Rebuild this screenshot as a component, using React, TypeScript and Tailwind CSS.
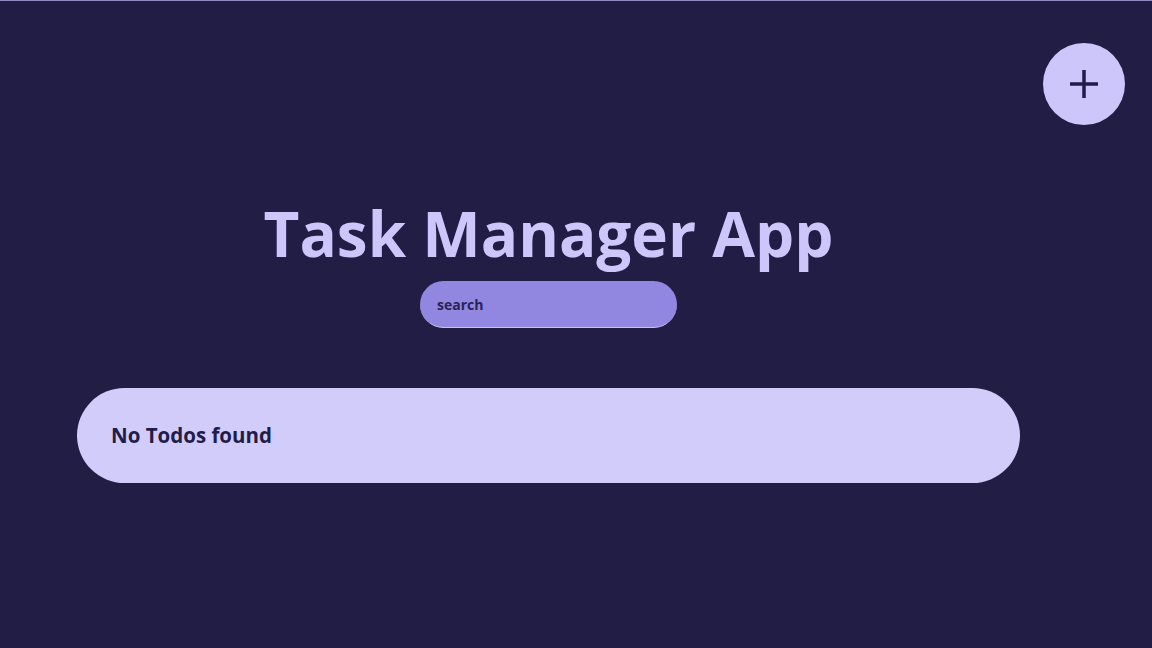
import { useState } from 'react';

/**
 * Task Manager - écran vide (aucune tâche)
 */
const App = () => {
  const [query, setQuery] = useState('');
  const todos: string[] = [];

  return (
    <div
      className="relative min-h-[648px] w-full bg-[#211d45] border-t border-[#8f89c4]"
      style={{ fontFamily: '"Open Sans", "Noto Sans", sans-serif' }}
    >
      <button
        className="absolute top-[42px] right-[27px] w-[82px] h-[82px] rounded-full bg-[#cdc6fb] flex items-center justify-center"
        aria-label="add"
      >
        <svg width="32" height="32" viewBox="0 0 32 32" fill="none">
          <path d="M16 2v28M2 16h28" stroke="#221d48" strokeWidth="3.5" />
        </svg>
      </button>

      <div className="ml-[77px] w-[943px] flex flex-col items-center pt-[188px]">
        <h1 className="text-[62px] leading-[88px] font-bold text-[#cdc6fb]">Task Manager App</h1>

        <input
          value={query}
          onChange={(e) => setQuery(e.target.value)}
          placeholder="search"
          className="mt-[4px] w-[257px] h-[47px] rounded-full bg-[#9186e0] px-[17px] text-sm font-bold text-[#2a2358] placeholder:text-[#2a2358] outline-none border-b border-[#c9c2f5]"
        />

        <div className="mt-[60px] w-full h-[95px] rounded-full bg-[#d2ccfb] flex items-center px-[34px]">
          {todos.length === 0 && (
            <p className="text-[20.5px] font-bold text-[#221d48]">No Todos found</p>
          )}
        </div>
      </div>
    </div>
  );
};

export default App;
